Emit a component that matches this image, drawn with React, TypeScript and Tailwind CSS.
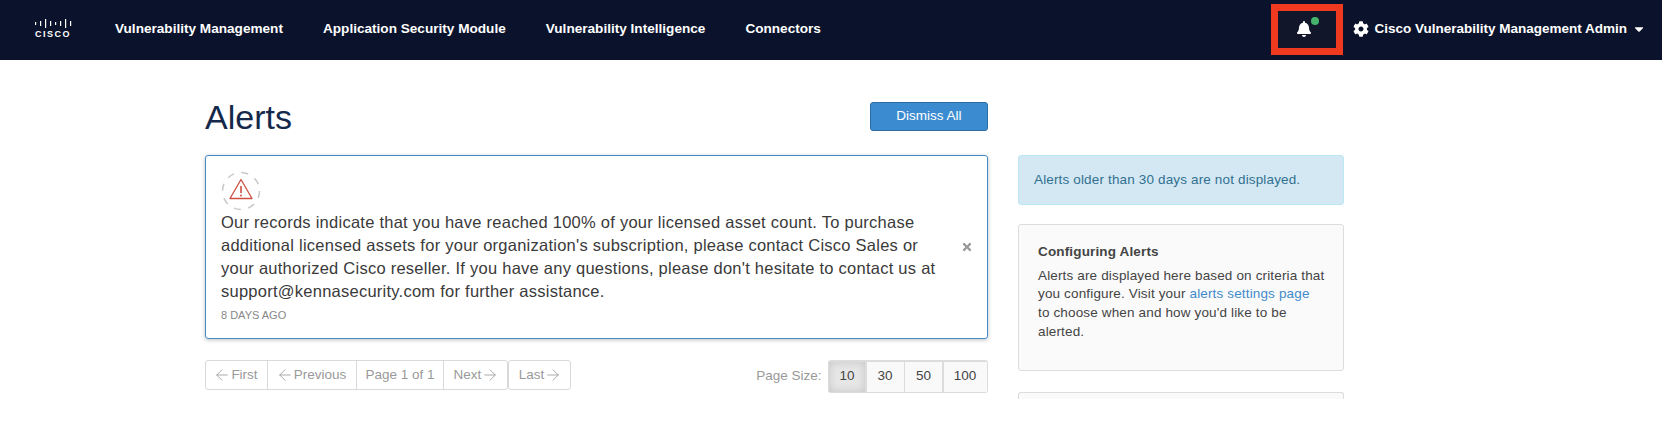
import { ArrowLeft, ArrowRight } from 'lucide-react'
import { FaBell, FaCog, FaCaretDown, FaTimes } from 'react-icons/fa'

const NAV_ITEMS = ['Vulnerability Management', 'Application Security Module', 'Vulnerability Intelligence', 'Connectors']
const PAGE_SIZES = ['10', '30', '50', '100']

function CiscoLogo() {
  const bars = [
    [1, 3],
    [6, 5],
    [11, 9],
    [16, 5],
    [21, 3],
    [26, 5],
    [31, 9],
    [36, 5],
  ]
  return (
    <div className="flex w-[38px] flex-col items-center">
      <svg width="38" height="9" viewBox="0 0 38 9" className="text-white">
        {bars.map(([x, h]) => (
          <rect key={x} x={x} y={(9 - h) / 2} width="1.2" height={h} fill="currentColor" />
        ))}
      </svg>
      <span className="mt-[2px] text-[9px] leading-[9px] font-bold tracking-[1.5px] text-white">CISCO</span>
    </div>
  )
}

function WarningIcon() {
  return (
    <svg width="40" height="40" viewBox="0 0 40 40" fill="none">
      <circle cx="20" cy="20" r="18.5" stroke="#c9c9c9" strokeWidth="1.5" strokeDasharray="7 7.5" />
      <path d="M20 8.5 L31 27.5 H9 Z" stroke="#cf4f43" strokeWidth="1.3" strokeLinejoin="round" />
      <path d="M20 15 V22" stroke="#cf4f43" strokeWidth="1.6" />
      <circle cx="20" cy="24.5" r="1" fill="#cf4f43" />
    </svg>
  )
}

function Header() {
  return (
    <header className="flex h-[60px] items-center bg-[#0b132c] pb-[2px] pl-[34px] text-[13.6px] font-bold text-white">
      <CiscoLogo />
      <nav className="ml-[43px] flex gap-[40px]">
        {NAV_ITEMS.map((item) => (
          <a key={item}>{item}</a>
        ))}
      </nav>
      <div className="ml-auto flex items-center">
        <div className="relative flex h-[51px] w-[72px] items-center justify-center border-[7px] border-[#f03a1f] bg-[#12162a]">
          <FaBell className="mr-[6px] text-[16px]" />
          <span className="absolute top-[6px] left-[33px] h-2 w-2 rounded-full bg-[#45b36b]" />
        </div>
        <FaCog className="ml-[10px] text-[16px]" />
        <span className="ml-[5px] text-[13.5px]">Cisco Vulnerability Management Admin</span>
        <FaCaretDown className="mr-[16px] ml-[5px] text-[14px]" />
      </div>
    </header>
  )
}

function Pagination() {
  return (
    <div className="mt-[21px] flex items-start justify-between">
      <div className="flex text-[13.5px] text-[#999]">
        <div className="flex h-[30px] items-center rounded-[3px] border border-[#d9d9d9]">
          <span className="flex h-full w-[62px] items-center justify-center gap-[2px] border-r border-[#d9d9d9]">
            <ArrowLeft size={18} strokeWidth={1.1} className="-mx-[2px]" />
            First
          </span>
          <span className="flex h-full w-[89px] items-center justify-center gap-[2px] border-r border-[#d9d9d9]">
            <ArrowLeft size={18} strokeWidth={1.1} className="-mx-[2px]" />
            Previous
          </span>
          <span className="flex h-full w-[87px] items-center justify-center border-r border-[#d9d9d9]">Page 1 of 1</span>
          <span className="flex h-full w-[63px] items-center justify-center gap-[2px]">
            Next
            <ArrowRight size={18} strokeWidth={1.1} className="-mx-[2px]" />
          </span>
        </div>
        <span className="flex h-[30px] w-[63px] items-center justify-center gap-[2px] rounded-[3px] border border-[#d9d9d9]">
          Last
          <ArrowRight size={18} strokeWidth={1.1} className="-mx-[2px]" />
        </span>
      </div>
      <div className="flex items-center text-[13.5px]">
        <span className="mr-[6px] text-[#999]">Page Size:</span>
        <div className="flex h-[33px] rounded-[3px] bg-[#dcdcdc] p-[1.5px] text-[#444]">
          {PAGE_SIZES.map((size, i) => (
            <span
              key={size}
              className={
                i === 0
                  ? 'flex h-full w-[36px] items-center justify-center bg-[#e6e6e6] shadow-[inset_0_0_8px_rgba(0,0,0,0.15)]'
                  : size === '100'
                    ? 'ml-[1.5px] flex h-full w-[43px] items-center justify-center bg-[#f9f9f9]'
                    : 'ml-[1.5px] flex h-full w-[37px] items-center justify-center bg-[#f9f9f9]'
              }
            >
              {size}
            </span>
          ))}
        </div>
      </div>
    </div>
  )
}

export default function App() {
  return (
    <div className="h-[424px] overflow-hidden bg-white font-['Liberation_Sans',Arial,sans-serif]">
      <Header />
      <main className="ml-[205px] flex w-[1139px] gap-[30px]">
        <section className="w-[783px]">
          <div className="flex h-[95px] items-start justify-between pt-[42px]">
            <h1 className="-mt-[3px] text-[34px] leading-[36px] text-[#15294b]">Alerts</h1>
            <button className="h-[29px] w-[118px] rounded-[3px] border border-[#2d6ca2] bg-[#3b8bd0] text-[13.5px] text-white">
              Dismiss All
            </button>
          </div>
          <article className="flex h-[184px] items-center rounded-[3px] border border-[#428bca] pr-[14px] pl-[15px] shadow-[0_1px_4px_rgba(0,0,0,0.25)]">
            <div className="w-[720px]">
              <WarningIcon />
              <p className="text-[16.5px] leading-[23px] tracking-[0.25px] text-[#3a3a3a]">
                Our records indicate that you have reached 100% of your licensed asset count. To purchase additional licensed assets for your organization's subscription, please contact Cisco Sales or your authorized Cisco reseller. If you have any questions, please don't hesitate to contact us at support@kennasecurity.com for further assistance.
              </p>
              <p className="mt-[4px] text-[11px] leading-[16px] text-[#888]">8 DAYS AGO</p>
            </div>
            <FaTimes className="ml-auto text-[12px] text-[#999]" />
          </article>
          <Pagination />
        </section>
        <aside className="w-[326px] pt-[95px] text-[13.5px] tracking-[0.15px]">
          <div className="flex h-[50px] items-center rounded-[3px] border border-[#bce8f1] bg-[#d4e8f4] px-[15px] pt-[1px] text-[#31708f]">
            Alerts older than 30 days are not displayed.
          </div>
          <div className="mt-[19px] h-[147px] rounded-[3px] border border-[#dcdcdc] bg-[#fafafa] pt-[18px] pr-[8px] pl-[19px] leading-[18.7px] text-[#444]">
            <h2 className="font-bold">Configuring Alerts</h2>
            <p className="mt-[5px]">
              Alerts are displayed here based on criteria that
              <br />
              you configure. Visit your <a className="text-[#428bca]">alerts settings page</a>
              <br />
              to choose when and how you'd like to be
              <br />
              alerted.
            </p>
          </div>
          <div className="mt-[21px] h-[7px] rounded-t-[3px] border-x border-t border-[#dcdcdc] bg-[#fafafa]" />
        </aside>
      </main>
    </div>
  )
}
